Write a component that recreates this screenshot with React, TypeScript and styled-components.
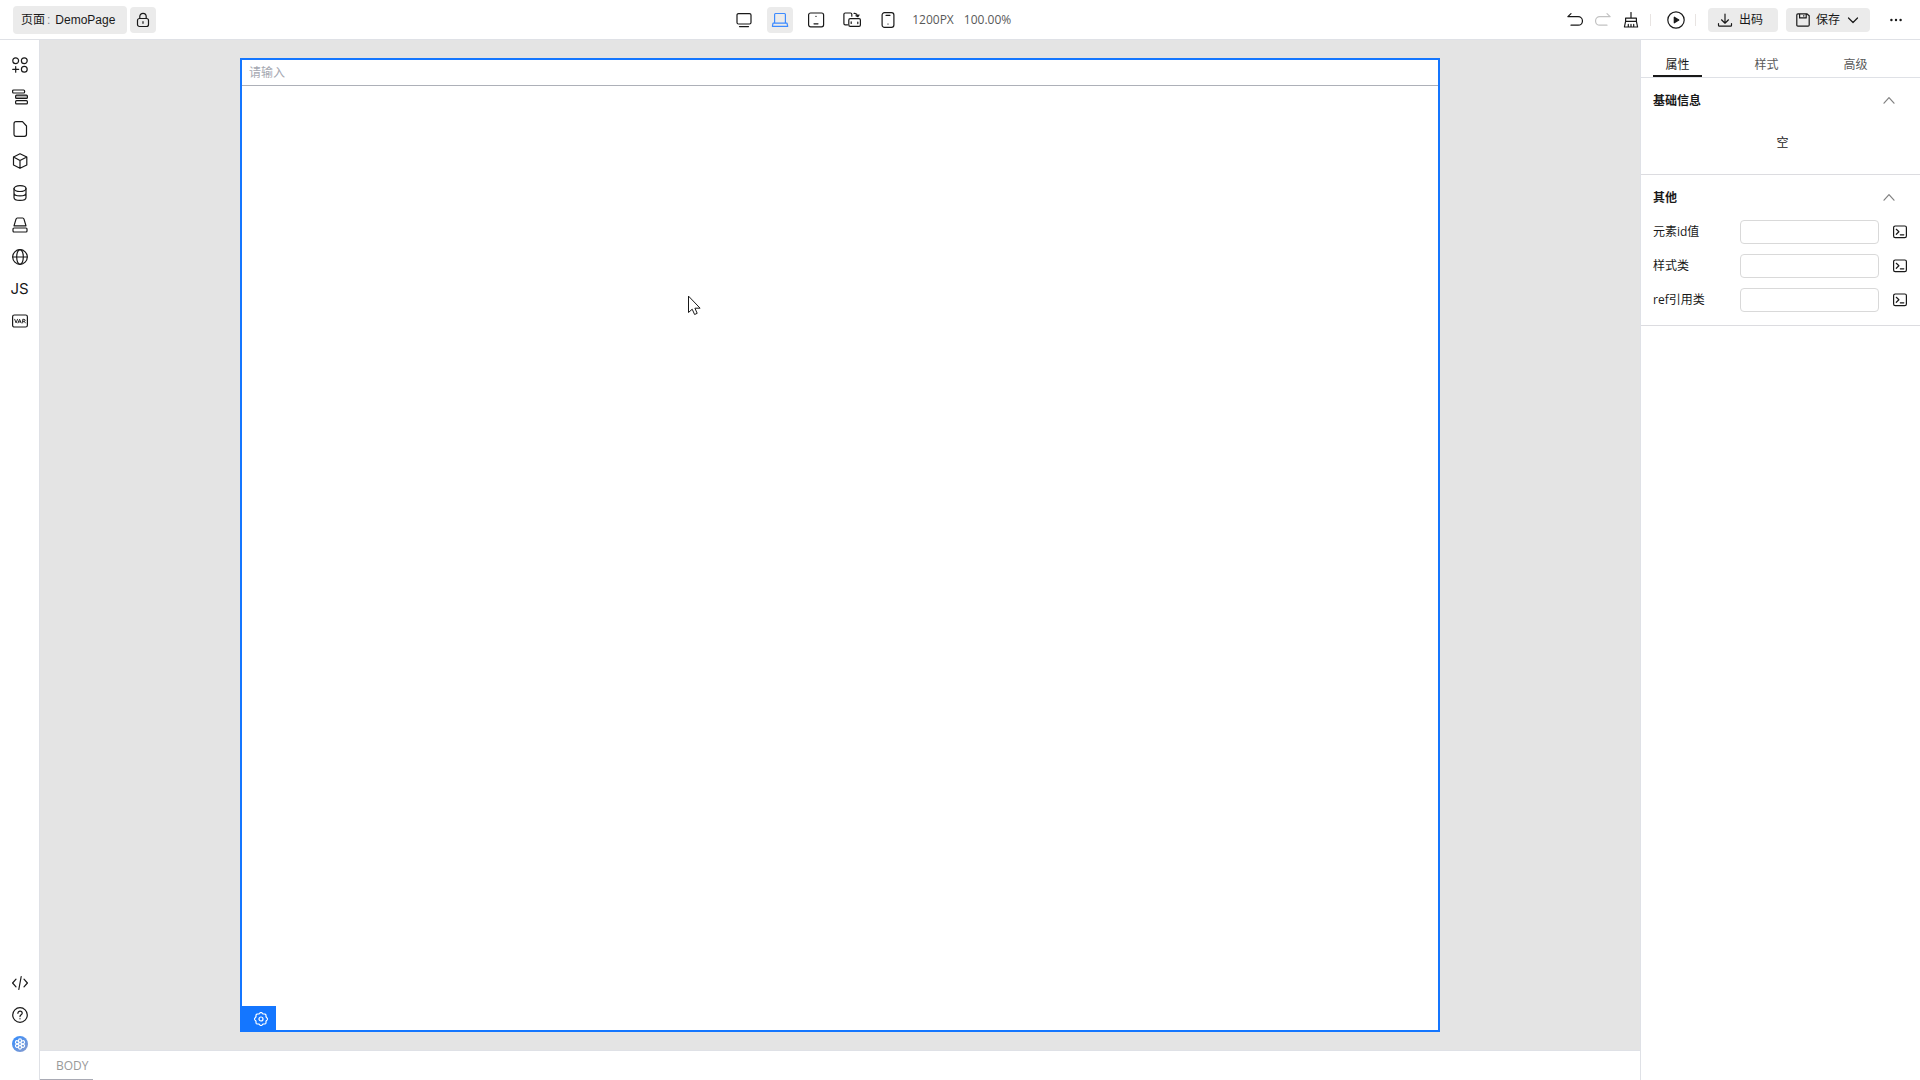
import React, { useState } from "react";
import styled, { createGlobalStyle } from "styled-components";

const color = {
  text: "#191919",
  muted: "#595959",
  faint: "#a4a7b0",
  line: "#dfe1e6",
  chip: "#ebebeb",
  stage: "#e4e4e4",
  accent: "#1476ff",
};

const uiFont = `"Open Sans", "Noto Sans CJK SC", sans-serif`;

const GlobalStyle = createGlobalStyle`
  *, *::before, *::after { box-sizing: border-box; }
  body {
    margin: 0;
    background: #fff;
    color: ${color.text};
    font: 12px/18px ${uiFont};
  }
  button, input { font: inherit; color: inherit; margin: 0; }
  button { border: 0; padding: 0; background: none; cursor: pointer; }
`;

const Icon = styled.svg<{ $size?: number }>`
  width: ${(p) => p.$size ?? 16}px;
  height: ${(p) => p.$size ?? 16}px;
  flex: none;
  display: block;
  fill: none;
  stroke: currentColor;
  stroke-width: 1.2;
  stroke-linecap: round;
  stroke-linejoin: round;
`;

const Shell = styled.div`
  display: flex;
  flex-direction: column;
  height: 100vh;
`;

const Header = styled.header`
  display: flex;
  align-items: center;
  justify-content: space-between;
  height: 40px;
  flex: none;
  padding: 0 11px 0 13px;
  border-bottom: 1px solid ${color.line};
`;

const Group = styled.div<{ $gap: number }>`
  display: flex;
  align-items: center;
  gap: ${(p) => p.$gap}px;
`;

const PageGroup = styled(Group)`
  padding-right: 24px;
`;

const PageName = styled.button`
  height: 28px;
  padding: 0 12px 0 8px;
  border-radius: 4px;
  background: ${color.chip};
  display: flex;
  align-items: center;
  font-family: "Liberation Sans", "Noto Sans CJK SC", sans-serif;
`;

const Colon = styled.span`
  padding: 0 5px 0 2px;
  color: #7f8392;
`;

const IconButton = styled.button<{ $active?: boolean; $filled?: boolean; $faded?: boolean }>`
  width: 26px;
  height: 26px;
  flex: none;
  display: flex;
  align-items: center;
  justify-content: center;
  border-radius: 4px;
  background: ${(p) => (p.$active || p.$filled ? color.chip : "transparent")};
  color: ${(p) => (p.$active ? "#3d8bff" : p.$faded ? "#c2c2c2" : color.text)};
`;

const Zoom = styled.div`
  display: flex;
  gap: 10px;
  padding-left: 1px;
  color: ${color.muted};
`;

const Divider = styled.span`
  width: 1px;
  height: 12px;
  background: #e8e4e2;
`;

const Actions = styled(Group)`
  padding-left: 6px;
`;

const TextButton = styled.button<{ $wide?: boolean }>`
  height: 24px;
  padding: ${(p) => (p.$wide ? "0 15px 0 9px" : "0 10px")};
  border-radius: 4px;
  background: ${color.chip};
  display: flex;
  align-items: center;
  gap: 6px;
`;

const MoreButton = styled(IconButton)`
  margin-left: 5px;
`;

const Body = styled.div`
  flex: 1;
  min-height: 0;
  display: flex;
`;

const Rail = styled.nav`
  width: 40px;
  flex: none;
  display: flex;
  flex-direction: column;
  align-items: center;
  justify-content: space-between;
  padding: 9px 0 23px;
  border-right: 1px solid ${color.line};
`;

const RailList = styled.div`
  display: flex;
  flex-direction: column;
`;

const RailButton = styled.button<{ $short?: boolean }>`
  width: 32px;
  height: ${(p) => (p.$short ? 26 : 32)}px;
  display: flex;
  align-items: center;
  justify-content: center;
  font-family: Inter, sans-serif;
  font-size: 15px;
`;

const Center = styled.main`
  flex: 1;
  min-width: 0;
  display: flex;
  flex-direction: column;
`;

const Stage = styled.div`
  flex: 1;
  min-height: 0;
  display: flex;
  justify-content: center;
  padding: 18px 0;
  background: ${color.stage};
`;

const Frame = styled.section`
  position: relative;
  width: 100%;
  max-width: 1200px;
  background: #fff;
  border: 2px solid ${color.accent};
`;

const FrameInput = styled.input`
  display: block;
  width: 100%;
  height: 26px;
  padding: 0 7px;
  border: 0;
  border-bottom: 1px solid #adb0b8;
  outline: none;
  &::placeholder { color: ${color.faint}; opacity: 1; }
`;

const FrameTag = styled.button`
  position: absolute;
  left: -2px;
  bottom: -2px;
  width: 36px;
  height: 26px;
  padding-left: 6px;
  display: flex;
  align-items: center;
  justify-content: center;
  background: ${color.accent};
  color: #fff;
`;

const Pointer = styled(Icon)`
  position: absolute;
  left: 445px;
  top: 235px;
  stroke-width: 1;
`;

const Crumbs = styled.footer`
  height: 30px;
  flex: none;
  display: flex;
  border-top: 1px solid ${color.line};
`;

const Crumb = styled.button`
  padding: 2px 4px 0 16px;
  border-bottom: 1px solid #a9abb5;
  color: #999;
`;

const Panel = styled.aside`
  width: 280px;
  flex: none;
  border-left: 1px solid ${color.line};
`;

const Tabs = styled.div`
  display: flex;
  align-items: flex-end;
  gap: 40px;
  height: 38px;
  padding: 0 12px;
  border-bottom: 1px solid ${color.line};
`;

const Tab = styled.button<{ $active: boolean }>`
  width: 49px;
  height: 22px;
  border-bottom: 2px solid ${(p) => (p.$active ? color.text : "transparent")};
  color: ${(p) => (p.$active ? color.text : color.muted)};
`;

const Section = styled.section`
  border-bottom: 1px solid #dcdce0;
`;

const SectionHead = styled.button`
  width: 100%;
  height: 45px;
  padding: 0 24px 0 12px;
  display: flex;
  align-items: center;
  justify-content: space-between;
  font-weight: 700;
`;

const SectionArrow = styled(Icon)`
  stroke: #808080;
`;

const Empty = styled.p`
  margin: 0;
  padding: 11px 0 22px 4px;
  text-align: center;
`;

const Fields = styled.div`
  display: flex;
  flex-direction: column;
  gap: 10px;
  padding: 0 13px 13px 12px;
`;

const Field = styled.div`
  display: grid;
  grid-template-columns: 87px 1fr 28px;
  align-items: center;
`;

const FieldInput = styled.input`
  width: 100%;
  height: 24px;
  padding: 0 8px;
  border: 1px solid #d9d9d9;
  border-radius: 4px;
  background: #fff;
`;

const BindButton = styled.button`
  display: flex;
  justify-content: flex-end;
`;

const ChevronUp = () => (
  <SectionArrow $size={14} viewBox="0 0 14 14">
    <path d="M2 9.200 7 3.600l5 5.600" />
  </SectionArrow>
);

const gearOutline =
  Array.from({ length: 96 }, (_, i) => {
    const angle = (i / 96) * Math.PI * 2;
    const radius = 6 + 0.5 * Math.cos(angle * 8);
    const x = 7 + radius * Math.cos(angle);
    const y = 7 + radius * Math.sin(angle);
    return `${i ? "L" : "M"}${x.toFixed(2)} ${y.toFixed(2)}`;
  }).join("") + "z";

const devices = [
  { label: "桌面", art: <><rect x="1" y="1.600" width="14" height="10.400" rx="1.500" /><path d="M3.500 14.600h9" /></> },
  { label: "笔记本", art: <path d="M2.600 11V2.400c0-.6.3-.9.9-.9h9c.6 0 .9.3.9.9V11M1 11.200h14l.7 3.100H.4z" /> },
  { label: "平板", art: <><rect x=".6" y="1" width="15" height="13.800" rx="2" /><path d="M6 11.800h4M7.900 4.300h.2" /></> },
  { label: "横屏", art: <><path d="M3.600 12.800H1.200C.4 12.800-.1 12.300-.1 11.500V2.300C-.1 1.500.4 1 1.200 1h5.400c.8 0 1.200.4 1.200 1.200v2" /><rect x="4.800" y="6.600" width="11.600" height="7.800" rx="1.400" /><path d="M7.200 9.800v1.600M13.800 10v1.600M10 1.300h.8c1.500.2 2.600 1.200 3 2.900M12 3.700l1.900 1 1.100-1.800" /></> },
  { label: "手机", art: <><rect x="2.100" y=".7" width="11.800" height="14.600" rx="2.400" /><path d="M6 3.300h4M7.900 12h.2" /></> },
];

const tools = [
  { label: "物料", art: <><circle cx="3.700" cy="3.700" r="2.900" /><circle cx="12.300" cy="3.700" r="2.900" /><circle cx="12.300" cy="12.200" r="2.900" /><path d="M3.700 9.500v5.700M.7 12.300h6" /></> },
  { label: "大纲树", art: <><rect x=".6" y="1" width="12" height="3" rx="1" /><rect x="3.600" y="6.200" width="11.800" height="3.200" rx="1" fill="#bbb" /><rect x="3.600" y="11.700" width="11.800" height="3.200" rx="1" /></> },
  { label: "页面管理", art: <path d="M4 .7h6.500L14.500 5v8.300c0 1.300-.7 2-2 2H4c-1.300 0-2-.7-2-2V2.700c0-1.300.7-2 2-2z" /> },
  { label: "区块", art: <path d="M8 .8 14.800 4v8L8 15.300 1.500 12V4zM1.500 4 8 7.500 14.800 4M8 7.500v7.800" /> },
  { label: "数据源", art: <><ellipse cx="8" cy="3.600" rx="6" ry="2.900" /><path d="M2 3.600v8.800c0 1.700 2.700 2.900 6 2.900s6-1.200 6-2.900V3.600M2 8c0 1.700 2.700 2.900 6 2.900S14 9.700 14 8" /></> },
  { label: "资源", art: <><path d="M2 8.800 4 2.200C4.200 1.600 4.600 1 5.300 1h5.400c.7 0 1.100.5 1.300 1.200l2 6.600z" /><rect x="1" y="11" width="14" height="4" rx="1" /></> },
  { label: "国际化", art: <><circle cx="8" cy="8" r="7.300" /><ellipse cx="8" cy="8" rx="3.300" ry="7.300" /><path d="M.7 8h14.600" /></> },
];

const fields = ["元素id值", "样式类", "ref引用类"];
const tabs = ["属性", "样式", "高级"];

export default function App() {
  const [device, setDevice] = useState(1);
  const [tab, setTab] = useState(0);

  return (
    <Shell>
      <GlobalStyle />
      <Header>
        <PageGroup $gap={3}>
          <PageName>
            页面<Colon>:</Colon>DemoPage
          </PageName>
          <IconButton $filled aria-label="锁定">
            <Icon viewBox="0 0 16 16">
              <rect x="2.500" y="6.500" width="11" height="8" rx="2" />
              <path d="M4.800 6.300V4.500a3.200 3.200 0 0 1 6.400 0v1.800M8 9.700v1.600" />
            </Icon>
          </IconButton>
        </PageGroup>

        <Group $gap={10}>
          {devices.map((d, i) => (
            <IconButton key={d.label} $active={i === device} aria-label={d.label} onClick={() => setDevice(i)}>
              <Icon viewBox="0 0 16 16" overflow="visible">{d.art}</Icon>
            </IconButton>
          ))}
          <Zoom>
            <span>1200PX</span>
            <span>100.00%</span>
          </Zoom>
        </Group>

        <Group $gap={6}>
          <Group $gap={2}>
            <IconButton aria-label="撤销">
              <Icon viewBox="0 0 16 16">
                <path d="M4 1.600.9 4.700h10.300a4.200 4.200 0 0 1 0 8.500H4" />
              </Icon>
            </IconButton>
            <IconButton $faded aria-label="重做">
              <Icon viewBox="0 0 16 16">
                <path d="m12 1.600 3.100 3.100H4.800a4.200 4.200 0 0 0 0 8.500H12" />
              </Icon>
            </IconButton>
            <IconButton aria-label="清空">
              <Icon viewBox="0 0 16 16">
                <path d="M8 .5V6M2.600 9.300V6.200h10.800v3.100M2.600 9.300 1.400 15h13.200l-1.200-5.700zM5.300 15v-2.600M8 15v-2.600M10.700 15v-2.600" />
              </Icon>
            </IconButton>
          </Group>
          <Divider />
          <Actions $gap={6}>
            <IconButton aria-label="预览">
              <Icon $size={18} viewBox="0 0 18 18">
                <circle cx="9" cy="9" r="8.200" />
                <path d="M7.300 6.200v5.600L11.800 9z" fill="currentColor" />
              </Icon>
            </IconButton>
            <Divider />
          </Actions>
          <Actions $gap={8}>
            <TextButton $wide>
              <Icon viewBox="0 0 16 16">
                <path d="M8 2v9M4.500 7.800 8 11.200l3.500-3.400M1.500 11.500v1.800c0 .6.3.9.9.9h11.200c.6 0 .9-.3.9-.9v-1.800" />
              </Icon>
              出码
            </TextButton>
            <TextButton>
              <Icon $size={14} viewBox="0 0 14 14">
                <path d="M1.900.8h8.900l2.400 2v9.300c0 .7-.4 1.100-1.100 1.100H1.900c-.7 0-1.100-.4-1.100-1.100V1.900C.8 1.200 1.200.8 1.900.8zM3.600.9v4h6.600v-4M7.800 2.500v.6" />
              </Icon>
              保存
              <Icon $size={14} viewBox="0 0 14 14">
                <path d="M2.500 5 7 9.500 11.500 5" />
              </Icon>
            </TextButton>
            <MoreButton aria-label="更多">
              <Icon viewBox="0 0 16 16">
                <g fill="currentColor" stroke="none">
                  <circle cx="3.400" cy="8" r="1.200" />
                  <circle cx="8" cy="8" r="1.200" />
                  <circle cx="12.600" cy="8" r="1.200" />
                </g>
              </Icon>
            </MoreButton>
          </Actions>
        </Group>
      </Header>

      <Body>
        <Rail>
          <RailList>
            {tools.map((t) => (
              <RailButton key={t.label} aria-label={t.label}>
                <Icon viewBox="0 0 16 16">{t.art}</Icon>
              </RailButton>
            ))}
            <RailButton>JS</RailButton>
            <RailButton aria-label="状态管理">
              <Icon viewBox="0 0 16 16">
                <rect x=".6" y="2" width="14.800" height="12" rx="1.800" />
                <path strokeWidth=".9" d="m2.700 6.300 1.400 3.600 1.400-3.600M6 9.900l1.600-3.600 1.600 3.600M6.600 8.900h2M10.700 9.900V6.300h1.300c1.600 0 1.600 2 0 2h-1.200M12.300 8.500l1.100 1.400" />
              </Icon>
            </RailButton>
          </RailList>
          <RailList>
            <RailButton aria-label="源码">
              <Icon viewBox="0 0 16 16">
                <path d="M4 4.200.6 8 4 11.800M12 4.200 15.400 8 12 11.800M9.200 1.500 6.800 14.500" />
              </Icon>
            </RailButton>
            <RailButton aria-label="帮助">
              <Icon viewBox="0 0 16 16">
                <circle cx="8" cy="8" r="7.300" />
                <path d="M5.900 6.300c0-2.900 4.300-2.700 4.300-.1C10.200 7.900 8 7.800 8 9.600M8 11.700v.1" />
              </Icon>
            </RailButton>
            <RailButton $short aria-label="AI 助手">
              <Icon viewBox="0 0 16 16">
                <defs>
                  <linearGradient id="ai" x1="0" y1="0" x2="1" y2="1">
                    <stop offset="0" stopColor="#2f8bff" />
                    <stop offset="1" stopColor="#8d9dcb" />
                  </linearGradient>
                </defs>
                <circle cx="8" cy="8" r="8" fill="url(#ai)" stroke="none" />
                <g stroke="#fff" strokeWidth="1.100">
                  {[0, 60, 120, 180, 240, 300].map((a) => (
                    <ellipse key={a} transform={`rotate(${a} 8 8)`} cx="8" cy="4.800" rx="1.500" ry="1.900" />
                  ))}
                </g>
              </Icon>
            </RailButton>
          </RailList>
        </Rail>

        <Center>
          <Stage>
            <Frame>
              <FrameInput placeholder="请输入" aria-label="请输入" />
              <Pointer $size={22} viewBox="0 0 22 22" aria-hidden>
                <path d="M1.500 1.500v16l3.700-3.300 2.400 5.300 2.600-1.200-2.300-5.100h4.800z" fill="#fff" />
              </Pointer>
              <FrameTag aria-label="设置">
                <Icon $size={14} viewBox="0 0 14 14">
                  <path d={gearOutline} />
                  <circle cx="7" cy="7" r="2" />
                </Icon>
              </FrameTag>
            </Frame>
          </Stage>
          <Crumbs>
            <Crumb>BODY</Crumb>
          </Crumbs>
        </Center>

        <Panel>
          <Tabs role="tablist">
            {tabs.map((name, i) => (
              <Tab key={name} role="tab" aria-selected={i === tab} $active={i === tab} onClick={() => setTab(i)}>
                {name}
              </Tab>
            ))}
          </Tabs>
          <Section>
            <SectionHead>
              基础信息
              <ChevronUp />
            </SectionHead>
            <Empty>空</Empty>
          </Section>
          <Section>
            <SectionHead>
              其他
              <ChevronUp />
            </SectionHead>
            <Fields>
              {fields.map((name, i) => (
                <Field key={name}>
                  <label htmlFor={`field-${i}`}>{name}</label>
                  <FieldInput id={`field-${i}`} />
                  <BindButton aria-label={`绑定${name}`}>
                    <Icon $size={14} viewBox="0 0 14 14">
                      <rect x=".6" y="1" width="12.800" height="11.600" rx="1.600" />
                      <path d="M3.300 4.300 5.900 6.800 3.300 9.300M7.300 9.800h3.500" />
                    </Icon>
                  </BindButton>
                </Field>
              ))}
            </Fields>
          </Section>
        </Panel>
      </Body>
    </Shell>
  );
}
